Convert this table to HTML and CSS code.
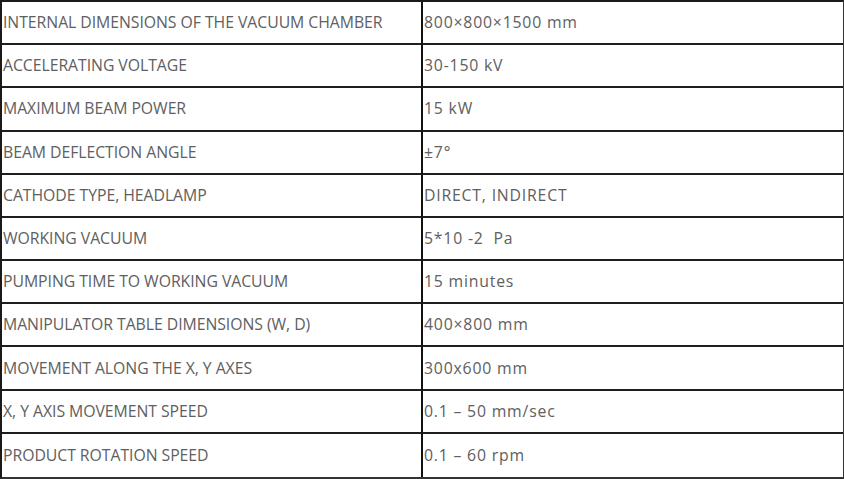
FILE: index.html
```html
<!DOCTYPE html>
<html>
<head>
<meta charset="utf-8">
<link rel="stylesheet" href="styles.css">
</head>
<body>
<div class="spec">
  <div class="cell">INTERNAL DIMENSIONS OF THE VACUUM CHAMBER</div><div class="cell val">800×800×1500 mm</div>
  <div class="cell">ACCELERATING VOLTAGE</div><div class="cell val">30-150 kV</div>
  <div class="cell">MAXIMUM BEAM POWER</div><div class="cell val">15 kW</div>
  <div class="cell">BEAM DEFLECTION ANGLE</div><div class="cell val">±7°</div>
  <div class="cell">CATHODE TYPE, HEADLAMP</div><div class="cell val">DIRECT, INDIRECT</div>
  <div class="cell">WORKING VACUUM</div><div class="cell val">5*10 -2&nbsp; Pa</div>
  <div class="cell">PUMPING TIME TO WORKING VACUUM</div><div class="cell val">15 minutes</div>
  <div class="cell">MANIPULATOR TABLE DIMENSIONS (W, D)</div><div class="cell val">400×800 mm</div>
  <div class="cell">MOVEMENT ALONG THE X, Y AXES</div><div class="cell val">300x600 mm</div>
  <div class="cell">X, Y AXIS MOVEMENT SPEED</div><div class="cell val">0.1 – 50 mm/sec</div>
  <div class="cell">PRODUCT ROTATION SPEED</div><div class="cell val">0.1 – 60 rpm</div>
</div>
</body>
</html>
```
FILE: styles.css
```css
html, body {
  margin: 0;
  padding: 0;
  background: #fff;
}
.spec {
  width: 844px;
  height: 479px;
  box-sizing: border-box;
  display: grid;
  grid-template-columns: 419px 1fr;
  grid-template-rows: repeat(11, 1fr);
  border-top: 2px solid #1a1a1a;
  border-left: 2px solid #1a1a1a;
  border-right: 1px solid #333;
  border-bottom: 2px solid #333;
  font-family: "Open Sans", "Noto Sans CJK KR", sans-serif;
  font-size: 15.8px;
  color: #606060;
}
.cell {
  display: flex;
  align-items: center;
  padding-left: 1px;
  padding-bottom: 1px;
  border-bottom: 2px solid #1e1e1e;
  white-space: nowrap;
  letter-spacing: -0.05px;
}
.cell:nth-last-child(-n+2) {
  border-bottom: none;
}
.val {
  border-left: 2px solid #111;
  padding-left: 1px;
  letter-spacing: 0.8px;
}
```
